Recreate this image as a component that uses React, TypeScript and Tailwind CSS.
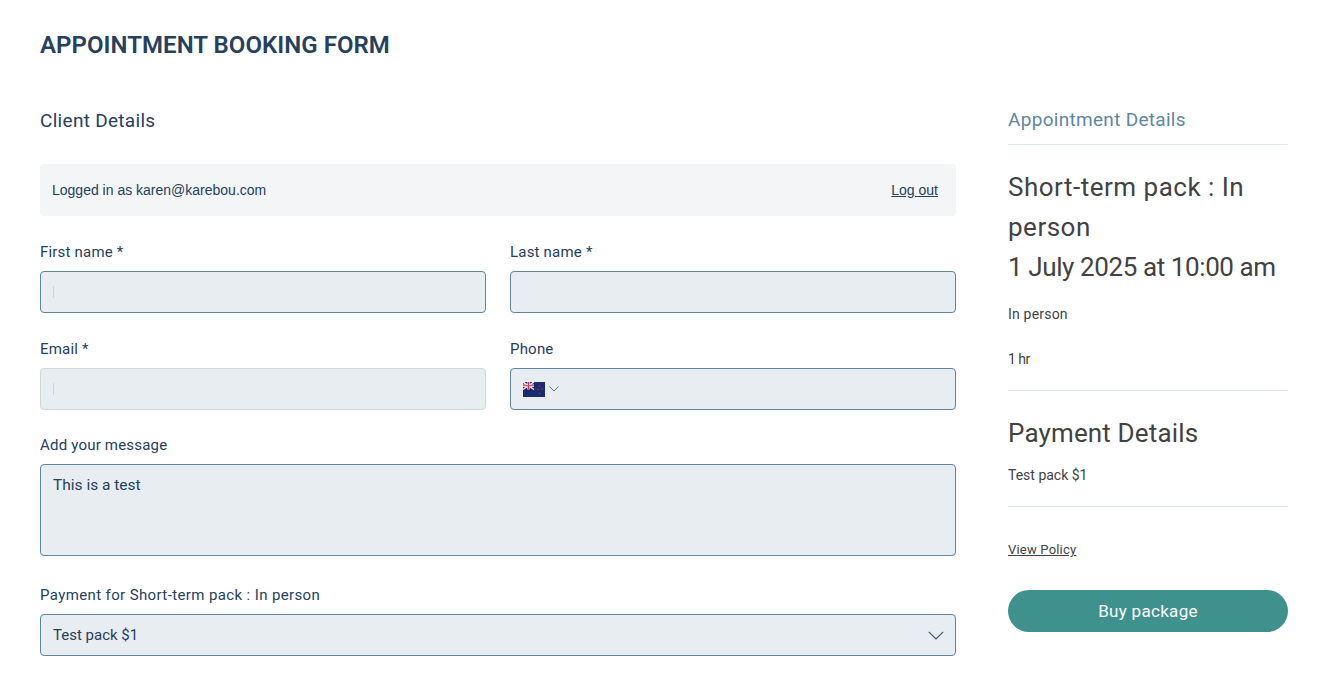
const barlow = "font-['Roboto',sans-serif]";

function Field({ label, className = '', labelClass = 'tracking-[0.2px]', children }: { label: string; className?: string; labelClass?: string; children: React.ReactNode }) {
  return (
    <div className={className}>
      <label className={`block h-[24px] text-[15px] leading-[24px] text-[#26405e] ${labelClass}`}>{label}</label>
      <div className="mt-[7px]">{children}</div>
    </div>
  );
}

function Caret() {
  return <span className="ml-[12px] block h-[12px] w-px bg-[#c9d6dc]" />;
}

function NzFlag() {
  return (
    <svg width="22" height="15" viewBox="0 0 22 15" className="block">
      <rect width="22" height="15" fill="#1d2a6d" />
      <path d="M0 0L11 7.500M11 0L0 7.500" stroke="#f4eef0" strokeWidth="1.5" />
      <path d="M5.500 0V7.500M0 3.750H11" stroke="#f4eef0" strokeWidth="2.4" />
      <path d="M5.500 0V7.500M0 3.750H11" stroke="#d8324a" strokeWidth="1.2" />
      <circle cx="16.500" cy="4" r="0.8" fill="#a8324f" />
      <circle cx="19" cy="7" r="0.8" fill="#a8324f" />
      <circle cx="15" cy="7.500" r="0.8" fill="#a8324f" />
      <circle cx="16.500" cy="11.500" r="0.8" fill="#a8324f" />
    </svg>
  );
}

export default function App() {
  return (
    <div className={`h-[673px] overflow-hidden bg-white pl-[40px] pr-[46px] ${barlow}`}>
      {/* Title */}
      <h1 className="pt-[29px] text-[24px] leading-[32px] font-semibold text-[#26405e] tracking-[0.05px]">
        APPOINTMENT BOOKING FORM
      </h1>

      <div className="mt-[45px] flex gap-[52px]">
        {/* Client form */}
        <div className="w-[916px] shrink-0">
          <h2 className="text-[19px] leading-[30px] tracking-[0.3px] text-[#26405e]">Client Details</h2>

          <div className="mt-[28px] flex h-[52px] items-center justify-between rounded-[4px] bg-[#f3f5f7] pl-[12px] pr-[18px] font-['Liberation_Sans',sans-serif] text-[14px] text-[#26405e]">
            <span>Logged in as karen@karebou.com</span>
            <a className="underline">Log out</a>
          </div>

          <div className="mt-[24px] grid grid-cols-2 gap-x-[24px] gap-y-[24px]">
            <Field label="First name *">
              <div className="flex h-[42px] items-center rounded-[4px] border border-[#5d859c] bg-[#e8edf1]">
                <Caret />
              </div>
            </Field>
            <Field label="Last name *">
              <div className="h-[42px] rounded-[4px] border border-[#5d859c] bg-[#e8edf1]" />
            </Field>
            <Field label="Email *">
              <div className="flex h-[42px] items-center rounded-[4px] border border-[#c9dcd4] bg-[#e8edf1]">
                <Caret />
              </div>
            </Field>
            <Field label="Phone">
              <div className="flex h-[42px] items-center gap-[4px] rounded-[4px] border border-[#5d859c] bg-[#e8edf1] pl-[12px]">
                <NzFlag />
                <svg width="10" height="6" viewBox="0 0 10 6" fill="none" stroke="#5c7388" strokeWidth="1">
                  <path d="M0.500 0.500L5 5L9.500 0.500" />
                </svg>
              </div>
            </Field>
          </div>

          <Field label="Add your message" className="mt-[23px]">
            <div className="h-[92px] rounded-[4px] border border-[#5d859c] bg-[#e8edf1] px-[12px] pt-[8px] text-[15.500px] leading-[24px] text-[#26405e]">
              This is a test
            </div>
          </Field>

          <Field label="Payment for Short-term pack : In person" labelClass="tracking-[0.38px]" className="mt-[27px]">
            <div className="flex h-[42px] items-center justify-between rounded-[4px] border border-[#5d859c] bg-[#e8edf1] pl-[12px] pr-[11px] text-[15px] text-[#26405e]">
              <span>Test pack $1</span>
              <svg width="16" height="9" viewBox="0 0 16 9" fill="none" stroke="#3f5870" strokeWidth="1.2">
                <path d="M0.800 0.800L8 8L15.200 0.800" />
              </svg>
            </div>
          </Field>
        </div>

        {/* Summary */}
        <aside className="w-[280px] shrink-0 text-[#424242]">
          <div className="border-b border-[#dfe7ed] pb-[10px] text-[19px] leading-[28px] tracking-[0.3px] text-[#5f87a0]">
            Appointment Details
          </div>
          <div className="mt-[22px] text-[26px] leading-[40px]">
            <span className="tracking-[0.5px]">Short-term pack : In person</span>
            <br />
            <span className="tracking-[-0.4px]">1 July 2025 at 10:00 am</span>
          </div>
          <p className="mt-[17px] text-[14px] leading-[20px] tracking-[0.2px]">In person</p>
          <p className="mt-[25px] text-[14px] leading-[20px] tracking-[-0.5px]">1 hr</p>
          <div className="mt-[21px] border-t border-[#dfe7ed] pt-[22px] text-[26px] leading-[40px] tracking-[0.15px]">Payment Details</div>
          <p className="mt-[12px] border-b border-[#dfe7ed] pb-[21px] text-[14px] leading-[20px]">Test pack $1</p>
          <a className="mt-[33px] block text-[13px] leading-[20px] tracking-[0.2px] underline">View Policy</a>
          <button className="mt-[30px] h-[42px] w-full rounded-full bg-[#3f918e] pt-[2px] text-[17px] tracking-[0.3px] text-white">
            Buy package
          </button>
        </aside>
      </div>
    </div>
  );
}
